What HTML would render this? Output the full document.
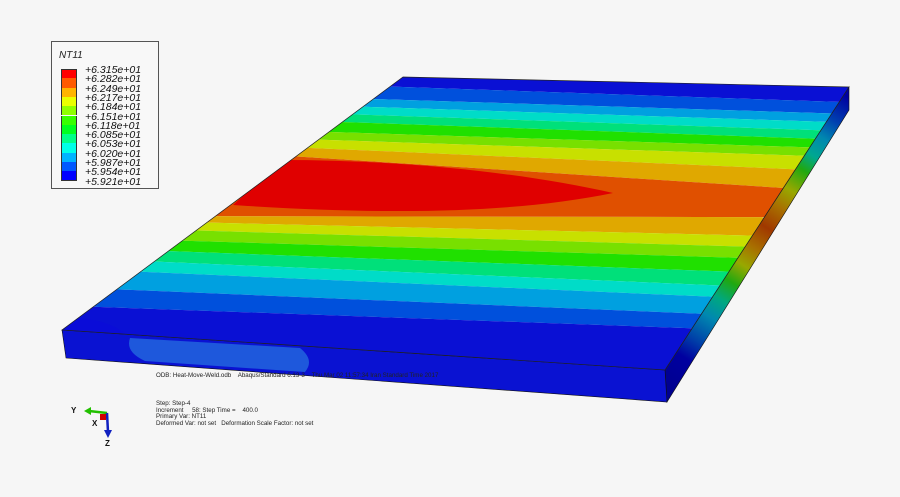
<!DOCTYPE html>
<html><head><meta charset="utf-8"><style>
html,body{margin:0;padding:0;background:#f6f6f6;}
body{width:900px;height:497px;overflow:hidden;position:relative;font-family:"Liberation Sans",sans-serif;}
#leg{position:absolute;left:51px;top:41px;width:108px;height:148px;border:1px solid #555;background:#f8f8f8;box-sizing:border-box;}
#leg .t{position:absolute;left:7px;top:8px;font-size:10px;font-style:italic;color:#222;}
#leg .bar{position:absolute;left:9px;width:16px;height:9.3px;border-left:1px solid #333;border-right:1px solid #333;box-sizing:border-box;}
#leg .lab{position:absolute;left:33px;font-size:10.5px;font-style:italic;color:#111;line-height:10px;}
.sm{position:absolute;font-size:6.2px;color:#222;white-space:pre;line-height:6.5px;}
</style></head><body>
<svg id="s" width="900" height="497" style="position:absolute;left:0;top:0">
<defs>
<clipPath id="top"><polygon points="403,77 849,87 665,370 62,330"/></clipPath>
<linearGradient id="side" gradientUnits="userSpaceOnUse" x1="849" y1="98" x2="666" y2="386">
<stop offset="0" stop-color="#0000a0"/>
<stop offset="0.08" stop-color="#0040b0"/>
<stop offset="0.14" stop-color="#0088b0"/>
<stop offset="0.2" stop-color="#00a890"/>
<stop offset="0.25" stop-color="#20a810"/>
<stop offset="0.32" stop-color="#98a800"/>
<stop offset="0.38" stop-color="#a87000"/>
<stop offset="0.45" stop-color="#a03800"/>
<stop offset="0.52" stop-color="#a87000"/>
<stop offset="0.58" stop-color="#98a800"/>
<stop offset="0.64" stop-color="#20a810"/>
<stop offset="0.7" stop-color="#00a880"/>
<stop offset="0.76" stop-color="#0088b0"/>
<stop offset="0.84" stop-color="#0040a8"/>
<stop offset="0.9" stop-color="#0000a0"/>
<stop offset="1" stop-color="#000090"/>
</linearGradient>
</defs>
<polygon points="849,87 849,110 667,402 665,370" fill="url(#side)" stroke="#111" stroke-width="0.6"/>
<polygon points="62,330 665,370 667,402 66,358" fill="#0a12d2" stroke="#111" stroke-width="0.6"/>
<path d="M130,338 L300,348 Q315,360 305,372 L145,361 Q125,352 130,338Z" fill="#1e58dc"/>
<g id="bands" clip-path="url(#top)"></g>
<g clip-path="url(#top)"><path d="M283,160 C400,160 520,172 613,193 C520,212 400,216 233,205 Z" fill="#e00000"/>
<path d="M62,330 L70,318 Q110,318 130,338 Z" fill="#0a0cd8"/></g>
<polygon points="403,77 849,87 665,370 62,330" fill="none" stroke="#222" stroke-width="0.7"/>
<line x1="107" y1="413" x2="89" y2="411" stroke="#22c000" stroke-width="2.5"/>
<polygon points="84,411 91,407 91,415" fill="#22c000"/>
<line x1="107" y1="413" x2="108" y2="432" stroke="#1020c0" stroke-width="2.5"/>
<polygon points="108,438 104,430 112,430" fill="#1020c0"/>
<rect x="100" y="414" width="6" height="6" fill="#d00000"/>
<text x="71" y="413" font-size="8" font-weight="bold" font-family="Liberation Sans" fill="#111">Y</text>
<text x="92" y="426" font-size="8" font-weight="bold" font-family="Liberation Sans" fill="#111">X</text>
<text x="105" y="446" font-size="8" font-weight="bold" font-family="Liberation Sans" fill="#111">Z</text>
</svg>
<script>
(function(){
var C={db:"#0a10d4",mb:"#0050dc",lb:"#00a0e0",cy:"#00dcc8",gc:"#00e07a",gr:"#20e000",lg:"#78e000",yg:"#c8e000",or:"#e0a800",dor:"#e05000"};
var seq=["db","mb","lb","cy","gc","gr","lg","yg","or","dor","or","yg","lg","gr","gc","cy","lb","mb","db"];
var L=[.03,.08,.11,.14,.17,.21,.24,.27,.30,.55,.57,.60,.64,.68,.72,.76,.83,.90,1.05];
var R=[.06,.10,.13,.16,.19,.22,.25,.30,.37,.46,.53,.57,.61,.66,.71,.75,.81,.86,1.05];
function lp(a,b,t){return [a[0]+(b[0]-a[0])*t,a[1]+(b[1]-a[1])*t];}
var A=[403,77],B=[62,330],P=[849,87],Q=[665,370];
var g=document.getElementById("bands"),h="",l0=-0.05,r0=-0.05;
for(var i=0;i<seq.length;i++){
var a=lp(A,B,l0),b=lp(P,Q,r0),c=lp(P,Q,R[i]),d=lp(A,B,L[i]);
a=[a[0]-60,a[1]];d=[d[0]-60,d[1]];b=[b[0]+60,b[1]];c=[c[0]+60,c[1]];
h+='<polygon fill="'+C[seq[i]]+'" points="'+a+' '+b+' '+c+' '+d+'"/>';
l0=L[i];r0=R[i];}
g.innerHTML=h;
})();
</script>
<div id="leg">
<div class="t">NT11</div>
<div class="bar" style="top:27px;background:#ff0000;border-top:1px solid #333"></div>
<div class="bar" style="top:36.3px;background:#ff5a00"></div>
<div class="bar" style="top:45.6px;background:#ffb400"></div>
<div class="bar" style="top:54.9px;background:#eaff00"></div>
<div class="bar" style="top:64.2px;background:#90ff00"></div>
<div class="bar" style="top:73.5px;background:#38ff00"></div>
<div class="bar" style="top:82.8px;background:#00ff20"></div>
<div class="bar" style="top:92.1px;background:#00ff88"></div>
<div class="bar" style="top:101.4px;background:#00ffe8"></div>
<div class="bar" style="top:110.7px;background:#00b4ff"></div>
<div class="bar" style="top:120px;background:#0058ff"></div>
<div class="bar" style="top:129.3px;background:#0000ff;border-bottom:1px solid #333"></div>
<div class="lab" style="top:23px">+6.315e+01</div>
<div class="lab" style="top:32.3px">+6.282e+01</div>
<div class="lab" style="top:41.6px">+6.249e+01</div>
<div class="lab" style="top:50.9px">+6.217e+01</div>
<div class="lab" style="top:60.2px">+6.184e+01</div>
<div class="lab" style="top:69.5px">+6.151e+01</div>
<div class="lab" style="top:78.8px">+6.118e+01</div>
<div class="lab" style="top:88.1px">+6.085e+01</div>
<div class="lab" style="top:97.4px">+6.053e+01</div>
<div class="lab" style="top:106.7px">+6.020e+01</div>
<div class="lab" style="top:116px">+5.987e+01</div>
<div class="lab" style="top:125.3px">+5.954e+01</div>
<div class="lab" style="top:134.6px">+5.921e+01</div>
</div>
<div class="sm" style="left:156px;top:373px">ODB: Heat-Move-Weld.odb    Abaqus/Standard 6.13-3    Thu Mar 02 11:57:34 Iran Standard Time 2017</div>
<div class="sm" style="left:156px;top:401px">Step: Step-4
Increment     58: Step Time =    400.0
Primary Var: NT11
Deformed Var: not set   Deformation Scale Factor: not set</div>
</body></html>
